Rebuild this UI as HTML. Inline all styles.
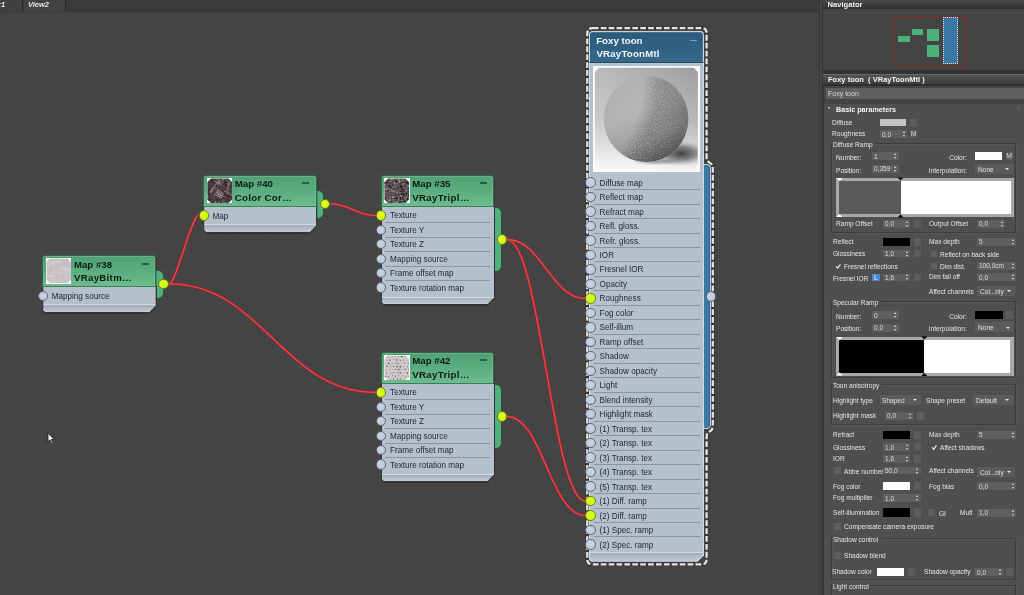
<!DOCTYPE html><html><head><meta charset="utf-8"><title>Slate Material Editor</title><style>
*{box-sizing:border-box;margin:0;padding:0}
html,body{width:1024px;height:595px;overflow:hidden;background:#444;font-family:"Liberation Sans",sans-serif;}
.abs{position:absolute}
#canvas{will-change:transform;position:absolute;left:0;top:0;width:820px;height:595px;background-color:#444444;
 background-image:linear-gradient(to right,#484848 1px,transparent 1px),linear-gradient(to bottom,#484848 1px,transparent 1px);
 background-size:16.13px 16.1px;background-position:8.3px 12.2px;border-right:1px solid #383838;overflow:hidden}
#tabbar{position:absolute;left:0;top:0;width:820px;height:11px;background:#3b3b3b;border-bottom:1px solid #333}
.tab{position:absolute;top:0;height:11px;background:#414141;border-right:1px solid #2c2c2c;color:#e8e8e8;font-size:7.5px;font-style:italic;font-weight:bold;line-height:9px;white-space:nowrap}
.node{position:absolute}
.nhead{position:absolute;left:0;top:0;border:1px solid #32674a;border-bottom:1px solid #3f7d5a;border-radius:3px 3px 0 0;background:linear-gradient(#50a274 0%,#59ac7e 45%,#6dbc8f 100%);box-shadow:inset 0 1px 0 rgba(255,255,255,.16),inset -1px 0 0 rgba(255,255,255,.12)}
.nbody{position:absolute;left:0;background:#b3bfca;border:1px solid #59626b;border-top:none}
.nfoot{position:absolute;left:0;background:linear-gradient(#9fabb6 0,#9fabb6 1px,#b9c4ce 1px,#b3bfca 100%);border:1px solid #59626b;border-top:none;border-radius:0 0 3px 3px}
.thumb{position:absolute;left:2.7px;top:2.2px;width:25.5px;height:25.5px;background:#fff;overflow:hidden}
.thumb i{position:absolute;left:1px;top:1px;width:24px;height:24px;border-radius:5px;display:block}
.t1,.t2{position:absolute;left:30.6px;font-weight:bold;font-size:9.7px;color:#0c1a12;white-space:nowrap;line-height:12px}
.t1{top:2.7px}.t2{top:16.1px;letter-spacing:0.3px}
.minus{position:absolute;height:2.1px;width:7.2px;background:#256343;top:6.6px}
.slot{position:absolute;left:0;height:14.5px;font-size:8.15px;color:#26292d;line-height:14.5px;white-space:nowrap}
.slot span{position:absolute;left:9.4px;top:1.3px}
.sep{position:absolute;height:1px;background:#8995a0;left:4px}
.dot{position:absolute;width:10.4px;height:10.4px;border-radius:50%}
.din{background:radial-gradient(circle at 45% 40%,#c9d5e3 0,#bfccdd 60%,#b4c2d5 100%);border:1px solid #5f6873}
.don{background:radial-gradient(circle at 45% 40%,#dcff2a 0,#d2f916 60%,#c3ea10 100%);border:1px solid #707f14}
.otab{position:absolute;background:#52b07e;border:1px solid #28563d;border-left:none;border-radius:0 6px 6px 0}
/* right panel */
#rp{will-change:transform;position:absolute;left:820px;top:0;width:204px;height:595px;background:#444;color:#e6e6e6;font-size:8.2px;overflow:hidden}
.lbl{position:absolute;white-space:nowrap;line-height:10px;color:#e6e6e6;font-size:7.4px}
.spin{position:absolute;background:#5f5f5f;height:8px;color:#dcdcdc;font-size:7.3px;line-height:8px;white-space:nowrap}
.spin b{position:absolute;left:2px;top:0.4px;font-weight:normal}
.spin s{position:absolute;right:1.2px;top:1px;width:3px;height:6px;text-decoration:none}
.spin s:before,.spin s:after{content:"";position:absolute;left:0;border-left:1.5px solid transparent;border-right:1.5px solid transparent}
.spin s:before{top:0;border-bottom:2px solid #e2e2e2}
.spin s:after{bottom:0;border-top:2px solid #e2e2e2}
.sw{position:absolute;height:8px}
.mb{position:absolute;width:7px;height:8px;background:#5d5d5d;color:#d8d8d8;font-size:7px;line-height:8px;text-align:center}
.cb{position:absolute;width:7px;height:7px;background:#5e5e5e}
.dd{position:absolute;background:#5b5b5b;height:10px;color:#e0e0e0;font-size:7.4px;line-height:10px;white-space:nowrap}
.dd b{position:absolute;left:2.5px;top:1px;font-weight:normal}
.dd:after{content:"";position:absolute;right:3.8px;top:4.5px;border-left:2.1px solid transparent;border-right:2.1px solid transparent;border-top:2.7px solid #ececec}
.grp{position:absolute;border:1px solid #3c3c3c;box-shadow:inset 1px 1px 0 #565656, 1px 1px 0 #565656}
.glbl{position:absolute;white-space:nowrap;line-height:10px;color:#e6e6e6;font-size:7.4px;background:#4f4f4f;padding:0 2px 0 1px}
</style></head><body>
<div id="canvas">
<div id="tabbar"></div>
<div class="abs" style="left:0;top:11px;width:819px;height:3px;background:linear-gradient(#3c3c3c,#434343)"></div>
<div class="tab" style="left:0;width:23px"><span class="abs" style="left:-2px;top:0">r1</span></div>
<div class="tab" style="left:24px;width:42px;background:#424242"><span class="abs" style="left:4px;top:0">View2</span></div>
<svg class="abs" style="left:0;top:0" width="820" height="595" viewBox="0 0 820 595" fill="none">
<path d="M169.2 283.8 C176.3 283.8,191.5 215.4,198.6 215.4" stroke="#a0242a" stroke-width="2.7" opacity="0.95"/>
<path d="M169.2 283.8 C262.3 283.8,282.9 392.5,376 392.5" stroke="#a0242a" stroke-width="2.7" opacity="0.95"/>
<path d="M330.2 203.8 C350.8 203.8,355.4 215.6,376 215.6" stroke="#a0242a" stroke-width="2.7" opacity="0.95"/>
<path d="M507 239.5 C542.3 239.5,550.2 298.4,585.5 298.4" stroke="#a0242a" stroke-width="2.7" opacity="0.95"/>
<path d="M507 239.5 C540.0 239.5,552.5 501.1,585.5 501.1" stroke="#a0242a" stroke-width="2.7" opacity="0.95"/>
<path d="M507 416.5 C542.3 416.5,550.2 515.6,585.5 515.6" stroke="#a0242a" stroke-width="2.7" opacity="0.95"/>
<path d="M169.2 283.8 C176.3 283.8,191.5 215.4,198.6 215.4" stroke="#e9454d" stroke-width="1.35"/>
<path d="M169.2 283.8 C262.3 283.8,282.9 392.5,376 392.5" stroke="#e9454d" stroke-width="1.35"/>
<path d="M330.2 203.8 C350.8 203.8,355.4 215.6,376 215.6" stroke="#e9454d" stroke-width="1.35"/>
<path d="M507 239.5 C542.3 239.5,550.2 298.4,585.5 298.4" stroke="#e9454d" stroke-width="1.35"/>
<path d="M507 239.5 C540.0 239.5,552.5 501.1,585.5 501.1" stroke="#e9454d" stroke-width="1.35"/>
<path d="M507 416.5 C542.3 416.5,550.2 515.6,585.5 515.6" stroke="#e9454d" stroke-width="1.35"/>
</svg>
<div class="node" style="left:42.3px;top:255px;width:113.8px;height:57.5px">
<div class="otab" style="left:113.3px;top:15.2px;width:8.3px;height:29px"></div>
<div class="abs" style="left:0;top:31px;width:114.6px;height:27.3px;background:#33383d;clip-path:polygon(0 0,100% 0,100% calc(100% - 6.5px),calc(100% - 6.5px) 100%,2px 100%,0 calc(100% - 2px));border-radius:0 0 2px 2px"></div>
<div class="abs" style="left:113.8px;top:3px;width:1px;height:44.0px;background:rgba(20,20,20,.22)"></div><div class="abs" style="left:3px;top:58.1px;width:103.8px;height:1.2px;background:rgba(20,20,20,.35)"></div>
<div class="abs" style="left:1px;top:32px;width:112.39999999999999px;height:25.3px;background:linear-gradient(#b4c0cb 0,#b4c0cb 17.5px,#d3dae1 17.5px,#d3dae1 18.5px,#a3aeb9 18.5px,#c3ccd4 100%);clip-path:polygon(0 0,100% 0,100% calc(100% - 6.5px),calc(100% - 6.5px) 100%,2px 100%,0 calc(100% - 2px))"></div>
<div class="abs" style="left:105.3px;top:51.0px;width:7px;height:1px;background:#8c97a2;transform:rotate(-45deg);transform-origin:0 0;opacity:.0"></div>
<div class="nhead" style="width:113.8px;height:32px">
<div class="thumb"><svg width="25.5" height="25.5" viewBox="0 0 25.5 25.5" style="position:absolute;left:0;top:0"><rect width="25.5" height="25.5" fill="#fdfdfd"/><clipPath id="c38"><path d="M4 0.4 H21.5 L25.1 4 V21.5 L21.5 25.1 H4 L0.4 21.5 V4 Z"/></clipPath><filter id="b38" x="-0.1" y="-0.1" width="1.2" height="1.2"><feGaussianBlur stdDeviation="0.45"/></filter><g clip-path="url(#c38)"><g filter="url(#b38)"><rect width="25.5" height="25.5" fill="#c9c3c5"/><rect x="16.0" y="10.7" width="8.3" height="2.2" fill="#cfc6c8" opacity="0.8" transform="rotate(10 16.0 10.7)"/><rect x="17.4" y="9.4" width="7.6" height="2.2" fill="#d6d0d1" opacity="0.8" transform="rotate(10 17.4 9.4)"/><rect x="8.6" y="6.7" width="6.0" height="2.2" fill="#cfc6c8" opacity="0.8" transform="rotate(170 8.6 6.7)"/><rect x="11.8" y="24.1" width="7.5" height="2.2" fill="#d6d0d1" opacity="0.8" transform="rotate(10 11.8 24.1)"/><rect x="2.1" y="12.2" width="6.6" height="2.2" fill="#d2cccd" opacity="0.8" transform="rotate(10 2.1 12.2)"/><rect x="9.5" y="18.1" width="9.5" height="2.2" fill="#d6d0d1" opacity="0.8" transform="rotate(170 9.5 18.1)"/><rect x="0.6" y="11.9" width="5.5" height="2.2" fill="#c0b8bb" opacity="0.8" transform="rotate(170 0.6 11.9)"/><rect x="22.3" y="2.2" width="8.6" height="2.2" fill="#c0b8bb" opacity="0.8" transform="rotate(100 22.3 2.2)"/><rect x="8.9" y="22.8" width="6.9" height="2.2" fill="#cfc6c8" opacity="0.8" transform="rotate(170 8.9 22.8)"/><rect x="4.5" y="6.6" width="8.1" height="2.2" fill="#cfc6c8" opacity="0.8" transform="rotate(170 4.5 6.6)"/><rect x="2.0" y="13.1" width="7.4" height="2.2" fill="#d2cccd" opacity="0.8" transform="rotate(100 2.0 13.1)"/><rect x="3.7" y="21.2" width="9.4" height="2.2" fill="#cfc6c8" opacity="0.8" transform="rotate(10 3.7 21.2)"/><rect x="21.1" y="0.8" width="8.5" height="2.2" fill="#d6d0d1" opacity="0.8" transform="rotate(170 21.1 0.8)"/><rect x="22.8" y="21.8" width="7.5" height="2.2" fill="#c0b8bb" opacity="0.8" transform="rotate(10 22.8 21.8)"/><rect x="9.4" y="17.1" width="9.6" height="2.2" fill="#c0b8bb" opacity="0.8" transform="rotate(10 9.4 17.1)"/><rect x="15.0" y="1.2" width="6.7" height="2.2" fill="#c0b8bb" opacity="0.8" transform="rotate(10 15.0 1.2)"/><rect x="9.4" y="22.6" width="9.2" height="2.2" fill="#cfc6c8" opacity="0.8" transform="rotate(170 9.4 22.6)"/><rect x="4.9" y="8.5" width="5.5" height="2.2" fill="#d2cccd" opacity="0.8" transform="rotate(170 4.9 8.5)"/><rect x="19.3" y="11.6" width="7.3" height="2.2" fill="#cfc6c8" opacity="0.8" transform="rotate(10 19.3 11.6)"/><rect x="6.5" y="10.5" width="4.1" height="2.2" fill="#c0b8bb" opacity="0.8" transform="rotate(100 6.5 10.5)"/><rect x="9.4" y="2.4" width="7.3" height="2.2" fill="#d6d0d1" opacity="0.8" transform="rotate(10 9.4 2.4)"/><rect x="17.3" y="15.4" width="5.7" height="2.2" fill="#d2cccd" opacity="0.8" transform="rotate(170 17.3 15.4)"/><rect x="19.3" y="6.5" width="6.5" height="2.2" fill="#c5bcbf" opacity="0.8" transform="rotate(170 19.3 6.5)"/><rect x="11.0" y="4.6" width="6.4" height="2.2" fill="#d2cccd" opacity="0.8" transform="rotate(170 11.0 4.6)"/><rect x="14.6" y="8.1" width="5.7" height="2.2" fill="#d2cccd" opacity="0.8" transform="rotate(10 14.6 8.1)"/><rect x="16.7" y="19.5" width="5.5" height="2.2" fill="#cfc6c8" opacity="0.8" transform="rotate(170 16.7 19.5)"/></g></g></svg></div>
<div class="t1">Map #38</div><div class="t2">VRayBitm…</div>
<div class="minus" style="left:98.3px"></div>
</div>
<div class="slot" style="top:33.65px;width:113.8px"><span>Mapping source</span></div>
<div class="dot din" style="left:-4.6px;top:35.70px"></div>
<div class="dot don" style="left:116.1px;top:23.8px"></div>
</div>
<div class="node" style="left:203.2px;top:174.6px;width:113.5px;height:57.5px">
<div class="otab" style="left:113px;top:15px;width:8.3px;height:29px"></div>
<div class="abs" style="left:0;top:31px;width:114.3px;height:27.3px;background:#33383d;clip-path:polygon(0 0,100% 0,100% calc(100% - 6.5px),calc(100% - 6.5px) 100%,2px 100%,0 calc(100% - 2px));border-radius:0 0 2px 2px"></div>
<div class="abs" style="left:113.5px;top:3px;width:1px;height:44.0px;background:rgba(20,20,20,.22)"></div><div class="abs" style="left:3px;top:58.1px;width:103.5px;height:1.2px;background:rgba(20,20,20,.35)"></div>
<div class="abs" style="left:1px;top:32px;width:112.1px;height:25.3px;background:linear-gradient(#b4c0cb 0,#b4c0cb 17.5px,#d3dae1 17.5px,#d3dae1 18.5px,#a3aeb9 18.5px,#c3ccd4 100%);clip-path:polygon(0 0,100% 0,100% calc(100% - 6.5px),calc(100% - 6.5px) 100%,2px 100%,0 calc(100% - 2px))"></div>
<div class="abs" style="left:105.0px;top:51.0px;width:7px;height:1px;background:#8c97a2;transform:rotate(-45deg);transform-origin:0 0;opacity:.0"></div>
<div class="nhead" style="width:113.5px;height:32px">
<div class="thumb"><svg width="25.5" height="25.5" viewBox="0 0 25.5 25.5" style="position:absolute;left:0;top:0"><rect width="25.5" height="25.5" fill="#fdfdfd"/><clipPath id="c40"><path d="M4 0.4 H21.5 L25.1 4 V21.5 L21.5 25.1 H4 L0.4 21.5 V4 Z"/></clipPath><filter id="b40" x="-0.1" y="-0.1" width="1.2" height="1.2"><feGaussianBlur stdDeviation="0.45"/></filter><g clip-path="url(#c40)"><g filter="url(#b40)"><rect width="25.5" height="25.5" fill="#4a3c3f"/><rect x="10.4" y="21.7" width="3.2" height="1.1" fill="#54464a" transform="rotate(30 10.4 21.7)"/><rect x="24.0" y="15.9" width="3.8" height="1.1" fill="#6d5a5e" transform="rotate(30 24.0 15.9)"/><rect x="21.8" y="9.9" width="3.2" height="1.1" fill="#8c777b" transform="rotate(115 21.8 9.9)"/><rect x="15.3" y="14.7" width="5.8" height="1.1" fill="#2c2426" transform="rotate(25 15.3 14.7)"/><rect x="19.4" y="6.5" width="4.5" height="1.1" fill="#2c2426" transform="rotate(30 19.4 6.5)"/><rect x="19.1" y="16.4" width="6.1" height="1.1" fill="#3a2f32" transform="rotate(25 19.1 16.4)"/><rect x="21.7" y="20.8" width="4.9" height="1.1" fill="#2c2426" transform="rotate(30 21.7 20.8)"/><rect x="17.9" y="6.4" width="6.1" height="1.1" fill="#3a2f32" transform="rotate(30 17.9 6.4)"/><rect x="19.2" y="2.3" width="6.5" height="1.1" fill="#3a2f32" transform="rotate(120 19.2 2.3)"/><rect x="11.9" y="2.6" width="4.2" height="1.1" fill="#8c777b" transform="rotate(25 11.9 2.6)"/><rect x="10.6" y="6.2" width="4.1" height="1.1" fill="#3a2f32" transform="rotate(115 10.6 6.2)"/><rect x="10.2" y="10.7" width="6.8" height="1.1" fill="#a08a8e" transform="rotate(30 10.2 10.7)"/><rect x="23.1" y="5.7" width="6.2" height="1.1" fill="#8c777b" transform="rotate(115 23.1 5.7)"/><rect x="23.9" y="19.8" width="6.6" height="1.1" fill="#54464a" transform="rotate(115 23.9 19.8)"/><rect x="10.1" y="20.7" width="5.5" height="1.1" fill="#3a2f32" transform="rotate(25 10.1 20.7)"/><rect x="10.9" y="22.6" width="8.4" height="1.1" fill="#54464a" transform="rotate(120 10.9 22.6)"/><rect x="3.2" y="2.3" width="8.8" height="1.1" fill="#2c2426" transform="rotate(25 3.2 2.3)"/><rect x="19.9" y="2.4" width="4.5" height="1.1" fill="#2c2426" transform="rotate(115 19.9 2.4)"/><rect x="-0.5" y="11.7" width="4.3" height="1.1" fill="#3a2f32" transform="rotate(120 -0.5 11.7)"/><rect x="6.4" y="11.8" width="3.2" height="1.1" fill="#8c777b" transform="rotate(120 6.4 11.8)"/><rect x="20.3" y="15.4" width="4.0" height="1.1" fill="#6d5a5e" transform="rotate(25 20.3 15.4)"/><rect x="7.8" y="15.6" width="7.6" height="1.1" fill="#a08a8e" transform="rotate(30 7.8 15.6)"/><rect x="17.5" y="12.4" width="8.4" height="1.1" fill="#a08a8e" transform="rotate(30 17.5 12.4)"/><rect x="10.8" y="15.3" width="8.6" height="1.1" fill="#a08a8e" transform="rotate(25 10.8 15.3)"/><rect x="23.0" y="13.9" width="3.2" height="1.1" fill="#6d5a5e" transform="rotate(30 23.0 13.9)"/><rect x="17.6" y="1.0" width="6.5" height="1.1" fill="#6d5a5e" transform="rotate(25 17.6 1.0)"/><rect x="-1.5" y="24.1" width="4.0" height="1.1" fill="#a08a8e" transform="rotate(115 -1.5 24.1)"/><rect x="13.4" y="-1.5" width="7.4" height="1.1" fill="#6d5a5e" transform="rotate(115 13.4 -1.5)"/><rect x="22.5" y="9.1" width="3.2" height="1.1" fill="#6d5a5e" transform="rotate(115 22.5 9.1)"/><rect x="-1.2" y="0.6" width="8.6" height="1.1" fill="#6d5a5e" transform="rotate(120 -1.2 0.6)"/><rect x="22.7" y="10.9" width="5.7" height="1.1" fill="#6d5a5e" transform="rotate(120 22.7 10.9)"/><rect x="13.1" y="22.6" width="8.2" height="1.1" fill="#8c777b" transform="rotate(120 13.1 22.6)"/><rect x="3.4" y="20.4" width="6.9" height="1.1" fill="#3a2f32" transform="rotate(115 3.4 20.4)"/><rect x="9.7" y="12.6" width="4.2" height="1.1" fill="#8c777b" transform="rotate(25 9.7 12.6)"/><rect x="15.0" y="22.2" width="8.4" height="1.1" fill="#8c777b" transform="rotate(30 15.0 22.2)"/><rect x="3.5" y="24.8" width="5.6" height="1.1" fill="#8c777b" transform="rotate(30 3.5 24.8)"/><rect x="3.7" y="14.1" width="3.7" height="1.1" fill="#2c2426" transform="rotate(115 3.7 14.1)"/><rect x="14.8" y="18.0" width="3.7" height="1.1" fill="#2c2426" transform="rotate(25 14.8 18.0)"/><rect x="9.5" y="0.5" width="8.7" height="1.1" fill="#6d5a5e" transform="rotate(30 9.5 0.5)"/><rect x="-1.6" y="11.1" width="6.2" height="1.1" fill="#2c2426" transform="rotate(120 -1.6 11.1)"/><rect x="13.5" y="-0.0" width="3.9" height="1.1" fill="#a08a8e" transform="rotate(25 13.5 -0.0)"/><rect x="9.9" y="4.4" width="7.5" height="1.1" fill="#6d5a5e" transform="rotate(25 9.9 4.4)"/><rect x="15.1" y="14.5" width="4.4" height="1.1" fill="#a08a8e" transform="rotate(115 15.1 14.5)"/><rect x="6.1" y="10.3" width="5.1" height="1.1" fill="#a08a8e" transform="rotate(115 6.1 10.3)"/><rect x="-0.7" y="-0.1" width="3.1" height="1.1" fill="#2c2426" transform="rotate(25 -0.7 -0.1)"/><rect x="16.8" y="15.5" width="4.8" height="1.1" fill="#a08a8e" transform="rotate(115 16.8 15.5)"/><rect x="8.9" y="16.8" width="4.2" height="1.1" fill="#6d5a5e" transform="rotate(120 8.9 16.8)"/><rect x="-0.0" y="-1.6" width="3.7" height="1.1" fill="#3a2f32" transform="rotate(30 -0.0 -1.6)"/><rect x="9.1" y="13.5" width="4.2" height="1.1" fill="#a08a8e" transform="rotate(30 9.1 13.5)"/><rect x="18.4" y="23.6" width="5.3" height="1.1" fill="#54464a" transform="rotate(25 18.4 23.6)"/><rect x="9.8" y="21.5" width="3.2" height="1.1" fill="#2c2426" transform="rotate(30 9.8 21.5)"/><rect x="1.4" y="17.6" width="5.0" height="1.1" fill="#8c777b" transform="rotate(120 1.4 17.6)"/><rect x="13.2" y="11.6" width="6.4" height="1.1" fill="#3a2f32" transform="rotate(30 13.2 11.6)"/><rect x="11.0" y="22.0" width="4.3" height="1.1" fill="#2c2426" transform="rotate(120 11.0 22.0)"/><rect x="24.0" y="15.1" width="5.1" height="1.1" fill="#2c2426" transform="rotate(120 24.0 15.1)"/><rect x="-0.9" y="20.0" width="5.6" height="1.1" fill="#54464a" transform="rotate(115 -0.9 20.0)"/><rect x="13.8" y="1.9" width="6.3" height="1.1" fill="#a08a8e" transform="rotate(120 13.8 1.9)"/><rect x="6.0" y="8.7" width="3.9" height="1.1" fill="#8c777b" transform="rotate(30 6.0 8.7)"/><rect x="3.5" y="21.3" width="8.1" height="1.1" fill="#2c2426" transform="rotate(115 3.5 21.3)"/><rect x="15.4" y="2.4" width="4.6" height="1.1" fill="#6d5a5e" transform="rotate(120 15.4 2.4)"/><rect x="-0.0" y="-1.7" width="7.9" height="1.1" fill="#54464a" transform="rotate(30 -0.0 -1.7)"/><rect x="7.2" y="2.5" width="8.3" height="1.1" fill="#8c777b" transform="rotate(25 7.2 2.5)"/><rect x="23.0" y="4.5" width="3.4" height="1.1" fill="#a08a8e" transform="rotate(120 23.0 4.5)"/><rect x="15.5" y="-1.2" width="4.3" height="1.1" fill="#2c2426" transform="rotate(115 15.5 -1.2)"/><rect x="10.5" y="4.1" width="7.3" height="1.1" fill="#8c777b" transform="rotate(115 10.5 4.1)"/><rect x="9.9" y="23.1" width="8.0" height="1.1" fill="#a08a8e" transform="rotate(120 9.9 23.1)"/><rect x="8.0" y="-1.5" width="8.2" height="1.1" fill="#2c2426" transform="rotate(120 8.0 -1.5)"/><rect x="4.8" y="3.0" width="3.7" height="1.1" fill="#54464a" transform="rotate(120 4.8 3.0)"/><rect x="3.3" y="10.1" width="8.2" height="1.1" fill="#2c2426" transform="rotate(120 3.3 10.1)"/><rect x="3.9" y="-0.4" width="4.6" height="1.1" fill="#3a2f32" transform="rotate(30 3.9 -0.4)"/></g></g></svg></div>
<div class="t1">Map #40</div><div class="t2">Color Cor…</div>
<div class="minus" style="left:98.0px"></div>
</div>
<div class="slot" style="top:33.65px;width:113.5px"><span>Map</span></div>
<div class="dot don" style="left:-4.6px;top:35.70px"></div>
<div class="dot don" style="left:116.39999999999999px;top:24.3px"></div>
</div>
<div class="node" style="left:380.7px;top:174.5px;width:113.8px;height:129.75px">
<div class="otab" style="left:113.3px;top:32px;width:8.2px;height:65.3px"></div>
<div class="abs" style="left:0;top:31px;width:114.6px;height:99.55px;background:#33383d;clip-path:polygon(0 0,100% 0,100% calc(100% - 6.5px),calc(100% - 6.5px) 100%,2px 100%,0 calc(100% - 2px));border-radius:0 0 2px 2px"></div>
<div class="abs" style="left:113.8px;top:3px;width:1px;height:116.25px;background:rgba(20,20,20,.22)"></div><div class="abs" style="left:3px;top:130.35px;width:103.8px;height:1.2px;background:rgba(20,20,20,.35)"></div>
<div class="abs" style="left:1px;top:32px;width:112.39999999999999px;height:97.55px;background:linear-gradient(#b4c0cb 0,#b4c0cb 89.75px,#d3dae1 89.75px,#d3dae1 90.75px,#a3aeb9 90.75px,#c3ccd4 100%);clip-path:polygon(0 0,100% 0,100% calc(100% - 6.5px),calc(100% - 6.5px) 100%,2px 100%,0 calc(100% - 2px))"></div>
<div class="abs" style="left:105.3px;top:123.25px;width:7px;height:1px;background:#8c97a2;transform:rotate(-45deg);transform-origin:0 0;opacity:.0"></div>
<div class="nhead" style="width:113.8px;height:32px">
<div class="thumb"><svg width="25.5" height="25.5" viewBox="0 0 25.5 25.5" style="position:absolute;left:0;top:0"><rect width="25.5" height="25.5" fill="#fdfdfd"/><clipPath id="c35"><path d="M4 0.4 H21.5 L25.1 4 V21.5 L21.5 25.1 H4 L0.4 21.5 V4 Z"/></clipPath><filter id="b35" x="-0.1" y="-0.1" width="1.2" height="1.2"><feGaussianBlur stdDeviation="0.45"/></filter><g clip-path="url(#c35)"><g filter="url(#b35)"><rect width="25.5" height="25.5" fill="#5a5054"/><circle cx="14.0" cy="19.1" r="0.9" fill="#7a7074"/><circle cx="7.3" cy="24.6" r="0.8" fill="#3a3236"/><circle cx="19.2" cy="23.7" r="0.6" fill="#141112"/><circle cx="20.5" cy="23.4" r="1.0" fill="#1c181a"/><circle cx="9.3" cy="24.4" r="0.5" fill="#8a6a72"/><circle cx="9.6" cy="0.6" r="0.8" fill="#9a9094"/><circle cx="0.6" cy="25.0" r="0.5" fill="#141112"/><circle cx="4.2" cy="1.9" r="0.9" fill="#1c181a"/><circle cx="7.5" cy="14.7" r="0.8" fill="#7a7074"/><circle cx="13.9" cy="21.0" r="1.0" fill="#8a6a72"/><circle cx="8.2" cy="15.8" r="0.5" fill="#8a6a72"/><circle cx="12.8" cy="19.3" r="0.9" fill="#1c181a"/><circle cx="17.1" cy="14.0" r="0.5" fill="#6a5c60"/><circle cx="10.4" cy="5.0" r="0.7" fill="#9a9094"/><circle cx="6.6" cy="14.9" r="0.6" fill="#7a7074"/><circle cx="0.5" cy="17.0" r="0.5" fill="#7a7074"/><circle cx="0.6" cy="17.8" r="0.7" fill="#9a9094"/><circle cx="17.1" cy="12.8" r="0.9" fill="#3a3236"/><circle cx="7.5" cy="11.3" r="0.7" fill="#9a9094"/><circle cx="17.8" cy="21.1" r="0.9" fill="#2a2426"/><circle cx="13.8" cy="4.3" r="0.8" fill="#2a2426"/><circle cx="12.7" cy="17.4" r="0.7" fill="#3a3236"/><circle cx="2.2" cy="14.4" r="0.7" fill="#8a6a72"/><circle cx="25.0" cy="24.3" r="0.7" fill="#8a6a72"/><circle cx="22.5" cy="16.6" r="0.6" fill="#141112"/><circle cx="17.2" cy="13.7" r="1.0" fill="#1c181a"/><circle cx="6.2" cy="21.0" r="0.7" fill="#aaa0a4"/><circle cx="10.8" cy="1.5" r="0.7" fill="#3a3236"/><circle cx="17.9" cy="4.6" r="0.9" fill="#1c181a"/><circle cx="12.6" cy="20.4" r="0.9" fill="#1c181a"/><circle cx="23.6" cy="18.1" r="0.6" fill="#3a3236"/><circle cx="24.6" cy="19.5" r="0.6" fill="#7a7074"/><circle cx="5.3" cy="5.3" r="0.9" fill="#3a3236"/><circle cx="19.8" cy="24.2" r="0.7" fill="#aaa0a4"/><circle cx="3.8" cy="11.3" r="0.7" fill="#3a3236"/><circle cx="22.1" cy="15.1" r="0.5" fill="#141112"/><circle cx="18.8" cy="21.5" r="0.6" fill="#aaa0a4"/><circle cx="9.4" cy="9.3" r="0.8" fill="#9a9094"/><circle cx="11.6" cy="25.0" r="0.6" fill="#1c181a"/><circle cx="9.9" cy="19.6" r="0.7" fill="#9a9094"/><circle cx="21.6" cy="21.5" r="0.7" fill="#141112"/><circle cx="6.7" cy="3.4" r="0.9" fill="#8a6a72"/><circle cx="12.5" cy="7.8" r="0.7" fill="#6a5c60"/><circle cx="2.9" cy="14.9" r="0.5" fill="#141112"/><circle cx="13.1" cy="14.3" r="0.9" fill="#9a9094"/><circle cx="5.5" cy="8.5" r="0.7" fill="#141112"/><circle cx="9.9" cy="10.8" r="0.5" fill="#3a3236"/><circle cx="19.8" cy="9.2" r="0.5" fill="#aaa0a4"/><circle cx="23.7" cy="5.9" r="0.9" fill="#2a2426"/><circle cx="25.4" cy="1.9" r="0.7" fill="#141112"/><circle cx="18.7" cy="6.8" r="0.7" fill="#7a7074"/><circle cx="5.0" cy="11.2" r="0.5" fill="#8a6a72"/><circle cx="19.6" cy="17.4" r="0.9" fill="#141112"/><circle cx="22.1" cy="12.8" r="0.8" fill="#aaa0a4"/><circle cx="19.0" cy="5.3" r="0.6" fill="#aaa0a4"/><circle cx="0.0" cy="4.7" r="1.0" fill="#2a2426"/><circle cx="11.9" cy="17.7" r="0.9" fill="#3a3236"/><circle cx="8.2" cy="24.7" r="0.9" fill="#6a5c60"/><circle cx="17.5" cy="8.4" r="0.9" fill="#141112"/><circle cx="6.8" cy="14.4" r="0.6" fill="#2a2426"/><circle cx="3.6" cy="9.9" r="0.9" fill="#aaa0a4"/><circle cx="15.8" cy="2.8" r="0.7" fill="#7a7074"/><circle cx="4.3" cy="7.2" r="0.7" fill="#7a7074"/><circle cx="8.8" cy="15.0" r="0.5" fill="#8a6a72"/><circle cx="17.6" cy="10.6" r="0.9" fill="#1c181a"/><circle cx="12.3" cy="3.4" r="0.9" fill="#141112"/><circle cx="7.4" cy="1.4" r="0.7" fill="#aaa0a4"/><circle cx="19.6" cy="15.7" r="1.0" fill="#1c181a"/><circle cx="1.6" cy="4.7" r="0.6" fill="#2a2426"/><circle cx="14.5" cy="20.1" r="0.5" fill="#aaa0a4"/><circle cx="20.5" cy="19.5" r="0.7" fill="#7a7074"/><circle cx="3.8" cy="24.4" r="0.7" fill="#2a2426"/><circle cx="4.1" cy="1.4" r="0.8" fill="#3a3236"/><circle cx="13.7" cy="10.2" r="0.7" fill="#2a2426"/><circle cx="2.4" cy="0.7" r="0.7" fill="#2a2426"/><circle cx="6.5" cy="13.0" r="0.8" fill="#6a5c60"/><circle cx="2.3" cy="15.3" r="0.6" fill="#8a6a72"/><circle cx="24.9" cy="13.5" r="0.5" fill="#141112"/><circle cx="19.7" cy="15.4" r="0.6" fill="#3a3236"/><circle cx="10.1" cy="23.5" r="0.5" fill="#8a6a72"/><circle cx="15.0" cy="21.5" r="0.9" fill="#7a7074"/><circle cx="14.0" cy="23.7" r="0.9" fill="#7a7074"/><circle cx="17.4" cy="16.1" r="1.0" fill="#1c181a"/><circle cx="7.8" cy="20.6" r="0.8" fill="#3a3236"/><circle cx="6.3" cy="22.9" r="0.9" fill="#6a5c60"/><circle cx="11.9" cy="19.7" r="0.6" fill="#1c181a"/><circle cx="19.1" cy="21.6" r="0.7" fill="#141112"/><circle cx="20.7" cy="13.1" r="0.5" fill="#141112"/><circle cx="12.4" cy="19.1" r="0.8" fill="#7a7074"/><circle cx="0.5" cy="14.2" r="0.8" fill="#7a7074"/><circle cx="22.0" cy="8.9" r="0.8" fill="#6a5c60"/><circle cx="25.5" cy="10.2" r="0.6" fill="#7a7074"/><circle cx="16.2" cy="21.3" r="0.7" fill="#3a3236"/><circle cx="15.6" cy="16.8" r="0.5" fill="#1c181a"/><circle cx="22.2" cy="20.1" r="1.0" fill="#aaa0a4"/><circle cx="12.8" cy="2.5" r="0.6" fill="#8a6a72"/><circle cx="12.0" cy="25.1" r="0.8" fill="#9a9094"/><circle cx="16.6" cy="17.8" r="0.8" fill="#aaa0a4"/><circle cx="1.2" cy="3.1" r="0.6" fill="#3a3236"/><circle cx="11.7" cy="18.4" r="0.5" fill="#6a5c60"/><circle cx="9.2" cy="14.0" r="0.5" fill="#6a5c60"/><circle cx="14.1" cy="2.4" r="0.8" fill="#9a9094"/><circle cx="4.4" cy="0.6" r="0.6" fill="#8a6a72"/><circle cx="18.3" cy="0.4" r="0.9" fill="#2a2426"/><circle cx="6.3" cy="9.5" r="0.5" fill="#9a9094"/><circle cx="19.4" cy="19.0" r="0.5" fill="#9a9094"/><circle cx="4.3" cy="9.3" r="0.5" fill="#2a2426"/><circle cx="3.5" cy="11.5" r="0.9" fill="#3a3236"/><circle cx="4.0" cy="12.1" r="0.6" fill="#141112"/><circle cx="15.2" cy="17.1" r="0.8" fill="#3a3236"/><circle cx="25.2" cy="19.7" r="0.6" fill="#141112"/><circle cx="10.1" cy="13.2" r="0.7" fill="#aaa0a4"/><circle cx="7.9" cy="14.5" r="0.7" fill="#3a3236"/><circle cx="2.8" cy="11.6" r="1.0" fill="#9a9094"/><circle cx="12.3" cy="10.4" r="0.7" fill="#aaa0a4"/><circle cx="3.6" cy="25.3" r="0.9" fill="#8a6a72"/><circle cx="5.2" cy="0.6" r="0.5" fill="#3a3236"/><circle cx="6.1" cy="7.7" r="0.8" fill="#1c181a"/><circle cx="1.5" cy="22.7" r="0.7" fill="#9a9094"/><circle cx="12.9" cy="4.8" r="0.8" fill="#9a9094"/><circle cx="12.6" cy="3.2" r="1.0" fill="#141112"/><circle cx="23.8" cy="0.0" r="0.9" fill="#8a6a72"/><circle cx="15.2" cy="4.1" r="0.8" fill="#8a6a72"/><circle cx="8.6" cy="19.4" r="0.7" fill="#aaa0a4"/><circle cx="12.9" cy="24.7" r="1.0" fill="#aaa0a4"/><circle cx="7.1" cy="7.3" r="0.9" fill="#2a2426"/><circle cx="3.2" cy="9.0" r="0.7" fill="#6a5c60"/><circle cx="4.9" cy="23.0" r="0.7" fill="#8a6a72"/><circle cx="11.4" cy="8.1" r="0.6" fill="#9a9094"/><circle cx="18.0" cy="18.3" r="1.0" fill="#9a9094"/><circle cx="23.0" cy="11.1" r="0.7" fill="#7a7074"/><circle cx="16.6" cy="20.5" r="0.6" fill="#1c181a"/><circle cx="23.8" cy="3.3" r="0.9" fill="#3a3236"/><circle cx="23.4" cy="20.9" r="0.8" fill="#141112"/><circle cx="9.6" cy="12.7" r="0.7" fill="#7a7074"/><circle cx="16.8" cy="12.4" r="0.5" fill="#1c181a"/><circle cx="15.4" cy="4.1" r="0.9" fill="#aaa0a4"/><circle cx="0.7" cy="4.5" r="0.9" fill="#141112"/><circle cx="25.1" cy="5.6" r="0.9" fill="#3a3236"/><circle cx="8.1" cy="1.7" r="0.6" fill="#9a9094"/><circle cx="24.3" cy="0.5" r="0.7" fill="#aaa0a4"/><circle cx="19.3" cy="1.2" r="1.0" fill="#8a6a72"/><circle cx="16.3" cy="14.8" r="0.9" fill="#8a6a72"/><circle cx="7.9" cy="7.1" r="0.9" fill="#1c181a"/><circle cx="7.0" cy="10.0" r="0.9" fill="#3a3236"/><circle cx="19.8" cy="23.1" r="0.7" fill="#1c181a"/><circle cx="20.9" cy="4.7" r="0.9" fill="#8a6a72"/><circle cx="12.3" cy="4.5" r="0.7" fill="#9a9094"/><circle cx="5.0" cy="11.1" r="0.5" fill="#6a5c60"/><circle cx="7.6" cy="21.6" r="0.7" fill="#3a3236"/><circle cx="19.3" cy="10.4" r="0.5" fill="#8a6a72"/><circle cx="11.8" cy="10.6" r="0.8" fill="#3a3236"/><circle cx="3.9" cy="4.5" r="0.6" fill="#2a2426"/><circle cx="24.9" cy="19.8" r="0.6" fill="#7a7074"/><circle cx="13.2" cy="20.1" r="0.8" fill="#141112"/><circle cx="20.4" cy="20.3" r="0.9" fill="#1c181a"/><circle cx="21.2" cy="8.1" r="0.7" fill="#1c181a"/><circle cx="3.0" cy="1.1" r="0.9" fill="#8a6a72"/><circle cx="1.7" cy="6.8" r="0.5" fill="#aaa0a4"/><circle cx="20.7" cy="9.1" r="0.6" fill="#6a5c60"/><circle cx="24.2" cy="10.8" r="0.6" fill="#2a2426"/><circle cx="5.9" cy="22.2" r="0.7" fill="#aaa0a4"/><circle cx="8.1" cy="13.2" r="0.6" fill="#aaa0a4"/><circle cx="11.2" cy="20.1" r="0.8" fill="#3a3236"/><circle cx="13.3" cy="5.5" r="0.6" fill="#aaa0a4"/><circle cx="10.4" cy="24.6" r="0.7" fill="#9a9094"/><circle cx="6.5" cy="25.5" r="0.7" fill="#9a9094"/><circle cx="0.1" cy="0.2" r="0.7" fill="#8a6a72"/><circle cx="8.8" cy="21.4" r="1.0" fill="#8a6a72"/><circle cx="5.0" cy="23.5" r="1.0" fill="#7a7074"/><circle cx="19.1" cy="5.0" r="0.5" fill="#9a9094"/><circle cx="1.7" cy="21.5" r="0.6" fill="#8a6a72"/><circle cx="18.2" cy="16.2" r="0.7" fill="#6a5c60"/><circle cx="23.5" cy="17.3" r="0.7" fill="#7a7074"/><circle cx="22.5" cy="20.2" r="0.6" fill="#6a5c60"/><circle cx="2.5" cy="13.1" r="0.6" fill="#3a3236"/><circle cx="22.9" cy="18.7" r="0.7" fill="#7a7074"/><circle cx="7.0" cy="17.3" r="0.6" fill="#1c181a"/><circle cx="9.9" cy="18.5" r="0.8" fill="#8a6a72"/><circle cx="23.1" cy="24.8" r="0.5" fill="#1c181a"/><circle cx="14.0" cy="3.9" r="0.5" fill="#2a2426"/><circle cx="21.4" cy="22.7" r="0.7" fill="#3a3236"/><circle cx="9.1" cy="20.6" r="0.7" fill="#2a2426"/><circle cx="21.3" cy="21.6" r="1.0" fill="#8a6a72"/><circle cx="23.5" cy="21.1" r="0.6" fill="#1c181a"/><circle cx="19.1" cy="12.3" r="0.6" fill="#141112"/><circle cx="8.8" cy="14.8" r="0.5" fill="#6a5c60"/><circle cx="18.5" cy="22.4" r="0.6" fill="#aaa0a4"/><circle cx="5.5" cy="13.9" r="0.6" fill="#9a9094"/><circle cx="1.3" cy="3.3" r="1.0" fill="#8a6a72"/><circle cx="4.2" cy="7.6" r="0.7" fill="#3a3236"/><circle cx="5.5" cy="24.8" r="0.7" fill="#3a3236"/><circle cx="16.4" cy="12.8" r="0.5" fill="#9a9094"/><circle cx="6.3" cy="21.3" r="0.6" fill="#8a6a72"/><circle cx="3.0" cy="4.6" r="0.8" fill="#1c181a"/><circle cx="0.3" cy="2.2" r="0.5" fill="#2a2426"/><circle cx="24.5" cy="8.4" r="0.9" fill="#9a9094"/><circle cx="6.6" cy="18.3" r="0.7" fill="#7a7074"/><circle cx="21.1" cy="8.1" r="0.7" fill="#8a6a72"/><circle cx="1.6" cy="11.3" r="0.9" fill="#9a9094"/><circle cx="0.8" cy="22.5" r="0.9" fill="#1c181a"/><circle cx="21.1" cy="8.8" r="0.7" fill="#141112"/><circle cx="6.7" cy="0.8" r="0.6" fill="#7a7074"/><circle cx="7.0" cy="24.0" r="0.9" fill="#3a3236"/><circle cx="20.1" cy="11.0" r="0.6" fill="#1c181a"/><circle cx="7.2" cy="13.3" r="0.9" fill="#8a6a72"/><circle cx="18.6" cy="19.5" r="0.9" fill="#2a2426"/><circle cx="15.9" cy="5.8" r="0.6" fill="#141112"/><circle cx="10.9" cy="2.1" r="0.7" fill="#7a7074"/><circle cx="20.0" cy="4.2" r="0.7" fill="#141112"/><circle cx="18.7" cy="0.2" r="0.8" fill="#8a6a72"/><circle cx="23.4" cy="23.2" r="0.7" fill="#6a5c60"/><circle cx="4.6" cy="15.0" r="0.6" fill="#8a6a72"/><circle cx="15.3" cy="1.5" r="0.8" fill="#9a9094"/><circle cx="3.5" cy="13.4" r="0.6" fill="#1c181a"/><circle cx="21.0" cy="10.0" r="1.0" fill="#8a6a72"/><circle cx="5.5" cy="10.7" r="1.0" fill="#8a6a72"/><circle cx="2.9" cy="21.9" r="0.5" fill="#1c181a"/><circle cx="15.8" cy="2.1" r="0.5" fill="#8a6a72"/><circle cx="23.2" cy="6.7" r="0.9" fill="#8a6a72"/><circle cx="16.0" cy="18.1" r="0.8" fill="#7a7074"/><circle cx="20.9" cy="14.5" r="0.6" fill="#9a9094"/><circle cx="1.2" cy="10.7" r="0.7" fill="#9a9094"/><circle cx="8.6" cy="19.6" r="0.7" fill="#aaa0a4"/><circle cx="20.3" cy="20.1" r="0.6" fill="#9a9094"/><circle cx="18.9" cy="9.0" r="0.6" fill="#141112"/><circle cx="10.7" cy="5.6" r="0.8" fill="#aaa0a4"/><circle cx="18.1" cy="14.5" r="0.6" fill="#7a7074"/><circle cx="18.1" cy="15.4" r="0.9" fill="#3a3236"/><circle cx="2.5" cy="14.0" r="0.7" fill="#8a6a72"/><circle cx="0.0" cy="4.6" r="0.6" fill="#1c181a"/><circle cx="16.1" cy="19.1" r="0.6" fill="#1c181a"/><circle cx="13.6" cy="18.1" r="0.7" fill="#8a6a72"/><circle cx="16.4" cy="8.3" r="0.7" fill="#141112"/><circle cx="4.5" cy="14.9" r="0.6" fill="#6a5c60"/><circle cx="4.7" cy="3.7" r="1.0" fill="#6a5c60"/><circle cx="24.9" cy="10.3" r="0.9" fill="#2a2426"/><circle cx="6.3" cy="25.4" r="0.8" fill="#9a9094"/><circle cx="24.8" cy="17.6" r="0.8" fill="#1c181a"/><circle cx="25.0" cy="5.2" r="0.6" fill="#141112"/><circle cx="15.7" cy="24.5" r="0.8" fill="#141112"/><circle cx="17.6" cy="20.5" r="0.6" fill="#9a9094"/><circle cx="23.5" cy="5.8" r="0.8" fill="#2a2426"/><circle cx="22.1" cy="4.8" r="0.8" fill="#141112"/><circle cx="5.3" cy="12.5" r="0.5" fill="#3a3236"/><circle cx="3.8" cy="21.9" r="0.7" fill="#9a9094"/><circle cx="19.4" cy="20.6" r="0.5" fill="#6a5c60"/><circle cx="12.2" cy="4.9" r="0.6" fill="#2a2426"/><circle cx="25.3" cy="1.6" r="1.0" fill="#8a6a72"/><circle cx="7.3" cy="6.9" r="0.7" fill="#aaa0a4"/><circle cx="17.9" cy="3.0" r="1.0" fill="#7a7074"/><circle cx="20.0" cy="11.1" r="0.6" fill="#1c181a"/><circle cx="0.5" cy="21.6" r="1.0" fill="#6a5c60"/><circle cx="16.8" cy="20.2" r="0.7" fill="#2a2426"/><circle cx="9.2" cy="19.4" r="0.8" fill="#aaa0a4"/><circle cx="5.4" cy="12.8" r="0.6" fill="#8a6a72"/><circle cx="24.2" cy="1.5" r="0.9" fill="#aaa0a4"/><circle cx="1.0" cy="24.6" r="0.6" fill="#2a2426"/><circle cx="18.7" cy="7.4" r="0.8" fill="#7a7074"/><circle cx="23.6" cy="4.8" r="0.5" fill="#141112"/></g></g></svg></div>
<div class="t1">Map #35</div><div class="t2">VRayTripl…</div>
<div class="minus" style="left:98.3px"></div>
</div>
<div class="slot" style="top:33.65px;width:113.8px"><span>Texture</span></div>
<div class="sep" style="top:47.70px;width:105.8px"></div>
<div class="slot" style="top:48.10px;width:113.8px"><span>Texture Y</span></div>
<div class="sep" style="top:62.15px;width:105.8px"></div>
<div class="slot" style="top:62.55px;width:113.8px"><span>Texture Z</span></div>
<div class="sep" style="top:76.60px;width:105.8px"></div>
<div class="slot" style="top:77.00px;width:113.8px"><span>Mapping source</span></div>
<div class="sep" style="top:91.05px;width:105.8px"></div>
<div class="slot" style="top:91.45px;width:113.8px"><span>Frame offset map</span></div>
<div class="sep" style="top:105.50px;width:105.8px"></div>
<div class="slot" style="top:105.90px;width:113.8px"><span>Texture rotation map</span></div>
<div class="dot don" style="left:-4.6px;top:35.70px"></div>
<div class="dot din" style="left:-4.6px;top:50.15px"></div>
<div class="dot din" style="left:-4.6px;top:64.60px"></div>
<div class="dot din" style="left:-4.6px;top:79.05px"></div>
<div class="dot din" style="left:-4.6px;top:93.50px"></div>
<div class="dot din" style="left:-4.6px;top:107.95px"></div>
<div class="dot don" style="left:116.1px;top:59.8px"></div>
</div>
<div class="node" style="left:380.7px;top:351.5px;width:113.8px;height:129.75px">
<div class="otab" style="left:113.3px;top:32px;width:8.2px;height:65.3px"></div>
<div class="abs" style="left:0;top:31px;width:114.6px;height:99.55px;background:#33383d;clip-path:polygon(0 0,100% 0,100% calc(100% - 6.5px),calc(100% - 6.5px) 100%,2px 100%,0 calc(100% - 2px));border-radius:0 0 2px 2px"></div>
<div class="abs" style="left:113.8px;top:3px;width:1px;height:116.25px;background:rgba(20,20,20,.22)"></div><div class="abs" style="left:3px;top:130.35px;width:103.8px;height:1.2px;background:rgba(20,20,20,.35)"></div>
<div class="abs" style="left:1px;top:32px;width:112.39999999999999px;height:97.55px;background:linear-gradient(#b4c0cb 0,#b4c0cb 89.75px,#d3dae1 89.75px,#d3dae1 90.75px,#a3aeb9 90.75px,#c3ccd4 100%);clip-path:polygon(0 0,100% 0,100% calc(100% - 6.5px),calc(100% - 6.5px) 100%,2px 100%,0 calc(100% - 2px))"></div>
<div class="abs" style="left:105.3px;top:123.25px;width:7px;height:1px;background:#8c97a2;transform:rotate(-45deg);transform-origin:0 0;opacity:.0"></div>
<div class="nhead" style="width:113.8px;height:32px">
<div class="thumb"><svg width="25.5" height="25.5" viewBox="0 0 25.5 25.5" style="position:absolute;left:0;top:0"><rect width="25.5" height="25.5" fill="#fdfdfd"/><clipPath id="c42"><path d="M4 0.4 H21.5 L25.1 4 V21.5 L21.5 25.1 H4 L0.4 21.5 V4 Z"/></clipPath><filter id="b42" x="-0.1" y="-0.1" width="1.2" height="1.2"><feGaussianBlur stdDeviation="0.45"/></filter><g clip-path="url(#c42)"><g filter="url(#b42)"><rect width="25.5" height="25.5" fill="#cfcaca"/><rect x="16.0" y="0.6" width="4.4" height="0.8" fill="#c4bcbd" transform="rotate(0 16.0 0.6)"/><rect x="18.4" y="16.9" width="7.5" height="0.8" fill="#c9c3c3" transform="rotate(0 18.4 16.9)"/><rect x="0.8" y="2.3" width="4.2" height="0.8" fill="#c4bcbd" transform="rotate(0 0.8 2.3)"/><rect x="17.9" y="17.5" width="5.1" height="0.8" fill="#d9b8bc" transform="rotate(90 17.9 17.5)"/><rect x="20.2" y="0.2" width="7.0" height="0.8" fill="#d9b8bc" transform="rotate(90 20.2 0.2)"/><rect x="6.9" y="5.4" width="6.8" height="0.8" fill="#d8d4d4" transform="rotate(0 6.9 5.4)"/><rect x="9.5" y="9.0" width="4.7" height="0.8" fill="#d8d4d4" transform="rotate(90 9.5 9.0)"/><rect x="18.2" y="13.4" width="7.9" height="0.8" fill="#d8d4d4" transform="rotate(90 18.2 13.4)"/><rect x="13.8" y="20.7" width="6.1" height="0.8" fill="#c4bcbd" transform="rotate(90 13.8 20.7)"/><rect x="17.6" y="1.1" width="4.1" height="0.8" fill="#d8d4d4" transform="rotate(90 17.6 1.1)"/><rect x="21.4" y="21.7" width="4.9" height="0.8" fill="#d9b8bc" transform="rotate(90 21.4 21.7)"/><rect x="4.1" y="8.9" width="6.4" height="0.8" fill="#c4bcbd" transform="rotate(0 4.1 8.9)"/><rect x="13.4" y="6.1" width="5.3" height="0.8" fill="#c4bcbd" transform="rotate(90 13.4 6.1)"/><rect x="17.1" y="21.1" width="6.9" height="0.8" fill="#d8d4d4" transform="rotate(0 17.1 21.1)"/><rect x="20.1" y="10.0" width="3.3" height="0.8" fill="#c4bcbd" transform="rotate(90 20.1 10.0)"/><rect x="16.4" y="9.9" width="7.6" height="0.8" fill="#c4bcbd" transform="rotate(90 16.4 9.9)"/><rect x="6.6" y="6.2" width="5.8" height="0.8" fill="#c9c3c3" transform="rotate(90 6.6 6.2)"/><rect x="22.4" y="10.0" width="4.1" height="0.8" fill="#c9c3c3" transform="rotate(0 22.4 10.0)"/><rect x="2.3" y="1.2" width="3.5" height="0.8" fill="#c9c3c3" transform="rotate(0 2.3 1.2)"/><rect x="14.9" y="9.6" width="6.0" height="0.8" fill="#d9b8bc" transform="rotate(90 14.9 9.6)"/><rect x="24.3" y="21.5" width="3.1" height="0.8" fill="#d9b8bc" transform="rotate(0 24.3 21.5)"/><rect x="19.2" y="8.5" width="4.5" height="0.8" fill="#c9c3c3" transform="rotate(0 19.2 8.5)"/><rect x="0.1" y="18.1" width="6.6" height="0.8" fill="#d8d4d4" transform="rotate(0 0.1 18.1)"/><rect x="21.8" y="7.5" width="6.2" height="0.8" fill="#c4bcbd" transform="rotate(0 21.8 7.5)"/><rect x="9.3" y="4.0" width="7.8" height="0.8" fill="#d9b8bc" transform="rotate(0 9.3 4.0)"/><rect x="12.2" y="2.8" width="4.8" height="0.8" fill="#c4bcbd" transform="rotate(90 12.2 2.8)"/><rect x="1.4" y="22.0" width="7.7" height="0.8" fill="#c9c3c3" transform="rotate(0 1.4 22.0)"/><rect x="20.4" y="24.4" width="5.7" height="0.8" fill="#c4bcbd" transform="rotate(0 20.4 24.4)"/><rect x="16.5" y="23.7" width="3.8" height="0.8" fill="#c4bcbd" transform="rotate(90 16.5 23.7)"/><rect x="23.2" y="18.9" width="6.4" height="0.8" fill="#c9c3c3" transform="rotate(90 23.2 18.9)"/><circle cx="1.9" cy="1.9" r="0.53" fill="#3a3638"/><circle cx="4.8" cy="1.6" r="0.38" fill="#4a4648"/><circle cx="8.2" cy="1.6" r="0.44" fill="#4a4648"/><circle cx="11.6" cy="1.4" r="0.38" fill="#4a4648"/><circle cx="15.0" cy="1.5" r="0.45" fill="#8a8486"/><circle cx="17.8" cy="1.5" r="0.72" fill="#3a3638"/><circle cx="21.4" cy="1.6" r="0.54" fill="#8a8486"/><circle cx="24.4" cy="1.5" r="0.52" fill="#8a8486"/><circle cx="3.1" cy="5.3" r="0.37" fill="#4a4648"/><circle cx="6.1" cy="5.2" r="0.67" fill="#4a4648"/><circle cx="9.5" cy="4.8" r="0.53" fill="#8a8486"/><circle cx="12.8" cy="5.0" r="0.70" fill="#4a4648"/><circle cx="16.3" cy="5.3" r="0.57" fill="#4a4648"/><circle cx="19.8" cy="5.0" r="0.36" fill="#4a4648"/><circle cx="23.3" cy="5.3" r="0.42" fill="#8a8486"/><circle cx="26.2" cy="5.3" r="0.71" fill="#6a6466"/><circle cx="1.4" cy="8.6" r="0.46" fill="#8a8486"/><circle cx="4.6" cy="8.4" r="0.64" fill="#3a3638"/><circle cx="8.2" cy="8.2" r="0.43" fill="#6a6466"/><circle cx="11.8" cy="8.3" r="0.57" fill="#5a5456"/><circle cx="14.3" cy="8.3" r="0.55" fill="#3a3638"/><circle cx="17.7" cy="8.6" r="0.38" fill="#6a6466"/><circle cx="21.0" cy="7.9" r="0.69" fill="#8a8486"/><circle cx="24.3" cy="8.5" r="0.45" fill="#3a3638"/><circle cx="2.8" cy="11.1" r="0.61" fill="#3a3638"/><circle cx="6.5" cy="11.7" r="0.43" fill="#5a5456"/><circle cx="9.5" cy="11.3" r="0.62" fill="#5a5456"/><circle cx="13.0" cy="11.7" r="0.72" fill="#4a4648"/><circle cx="16.3" cy="11.8" r="0.75" fill="#4a4648"/><circle cx="19.7" cy="11.4" r="0.40" fill="#5a5456"/><circle cx="23.3" cy="11.7" r="0.50" fill="#6a6466"/><circle cx="26.2" cy="11.4" r="0.47" fill="#3a3638"/><circle cx="1.1" cy="14.9" r="0.47" fill="#4a4648"/><circle cx="5.2" cy="14.3" r="0.40" fill="#4a4648"/><circle cx="8.3" cy="14.3" r="0.46" fill="#6a6466"/><circle cx="11.6" cy="14.4" r="0.60" fill="#5a5456"/><circle cx="14.7" cy="14.4" r="0.71" fill="#4a4648"/><circle cx="17.7" cy="14.5" r="0.46" fill="#4a4648"/><circle cx="21.2" cy="14.3" r="0.74" fill="#6a6466"/><circle cx="24.8" cy="14.6" r="0.52" fill="#4a4648"/><circle cx="2.8" cy="18.2" r="0.63" fill="#6a6466"/><circle cx="6.5" cy="18.1" r="0.58" fill="#6a6466"/><circle cx="9.7" cy="17.4" r="0.50" fill="#4a4648"/><circle cx="13.4" cy="17.6" r="0.45" fill="#4a4648"/><circle cx="16.2" cy="17.8" r="0.70" fill="#3a3638"/><circle cx="19.8" cy="18.1" r="0.44" fill="#6a6466"/><circle cx="23.3" cy="18.0" r="0.70" fill="#4a4648"/><circle cx="26.0" cy="18.1" r="0.66" fill="#8a8486"/><circle cx="1.7" cy="21.3" r="0.67" fill="#5a5456"/><circle cx="4.5" cy="21.2" r="0.50" fill="#4a4648"/><circle cx="8.4" cy="20.8" r="0.68" fill="#8a8486"/><circle cx="11.3" cy="21.3" r="0.70" fill="#6a6466"/><circle cx="14.3" cy="20.8" r="0.48" fill="#4a4648"/><circle cx="18.4" cy="20.8" r="0.61" fill="#8a8486"/><circle cx="21.4" cy="21.3" r="0.48" fill="#4a4648"/><circle cx="24.3" cy="21.4" r="0.42" fill="#5a5456"/><circle cx="2.8" cy="24.3" r="0.49" fill="#5a5456"/><circle cx="6.4" cy="24.6" r="0.40" fill="#3a3638"/><circle cx="9.5" cy="23.8" r="0.52" fill="#3a3638"/><circle cx="13.4" cy="24.2" r="0.64" fill="#6a6466"/><circle cx="16.2" cy="23.9" r="0.62" fill="#5a5456"/><circle cx="19.7" cy="24.3" r="0.40" fill="#5a5456"/><circle cx="23.0" cy="24.3" r="0.48" fill="#5a5456"/><circle cx="26.3" cy="24.0" r="0.62" fill="#8a8486"/></g></g></svg></div>
<div class="t1">Map #42</div><div class="t2">VRayTripl…</div>
<div class="minus" style="left:98.3px"></div>
</div>
<div class="slot" style="top:33.65px;width:113.8px"><span>Texture</span></div>
<div class="sep" style="top:47.70px;width:105.8px"></div>
<div class="slot" style="top:48.10px;width:113.8px"><span>Texture Y</span></div>
<div class="sep" style="top:62.15px;width:105.8px"></div>
<div class="slot" style="top:62.55px;width:113.8px"><span>Texture Z</span></div>
<div class="sep" style="top:76.60px;width:105.8px"></div>
<div class="slot" style="top:77.00px;width:113.8px"><span>Mapping source</span></div>
<div class="sep" style="top:91.05px;width:105.8px"></div>
<div class="slot" style="top:91.45px;width:113.8px"><span>Frame offset map</span></div>
<div class="sep" style="top:105.50px;width:105.8px"></div>
<div class="slot" style="top:105.90px;width:113.8px"><span>Texture rotation map</span></div>
<div class="dot don" style="left:-4.6px;top:35.70px"></div>
<div class="dot din" style="left:-4.6px;top:50.15px"></div>
<div class="dot din" style="left:-4.6px;top:64.60px"></div>
<div class="dot din" style="left:-4.6px;top:79.05px"></div>
<div class="dot din" style="left:-4.6px;top:93.50px"></div>
<div class="dot din" style="left:-4.6px;top:107.95px"></div>
<div class="dot don" style="left:116.1px;top:59.8px"></div>
</div>
<svg class="abs" style="left:0;top:0" width="820" height="595" viewBox="0 0 820 595" fill="none">
<path d="M592.8 28.1 H701.8 Q706.6 28.1 706.6 33 V157.5 Q706.6 161 709.7 162.7 Q712.8 164.4 712.8 168.5 V426 Q712.8 430 709.7 431.5 Q706.6 433 706.6 437 V559.4 Q706.6 564.4 701.6 564.4 H592.3 Q587.3 564.4 587.3 559.4 V33.6 Q587.3 28.1 592.8 28.1 Z" stroke="#343434" stroke-width="3.6"/>
<path d="M592.8 28.1 H701.8 Q706.6 28.1 706.6 33 V157.5 Q706.6 161 709.7 162.7 Q712.8 164.4 712.8 168.5 V426 Q712.8 430 709.7 431.5 Q706.6 433 706.6 437 V559.4 Q706.6 564.4 701.6 564.4 H592.3 Q587.3 564.4 587.3 559.4 V33.6 Q587.3 28.1 592.8 28.1 Z" stroke="#e4e4e4" stroke-width="2.3" stroke-dasharray="5.8 2.1"/>
</svg>
<div class="node" style="left:589px;top:30.8px;width:115px;height:540px">
<div class="abs" style="left:114px;top:133.0px;width:8.4px;height:265.6px;background:#3b79a3;border:1px solid #c4d3de;border-left:none;border-radius:0 4.5px 4.5px 0;box-shadow:inset -1px 0 0 #2f668c"></div>
<div class="abs" style="left:0;top:31.5px;width:115px;height:499.4px;background:#d2dbe3;clip-path:polygon(0 0,100% 0,100% calc(100% - 6.5px),calc(100% - 6.5px) 100%,2px 100%,0 calc(100% - 2px));border-radius:0 0 3px 3px"></div>
<div class="abs" style="left:1px;top:32.5px;width:113px;height:497.6px;background:linear-gradient(#b4c0cb 0,#b4c0cb 489.4px,#d3dae1 489.4px,#d3dae1 490.4px,#a3aeb9 490.4px,#c3ccd4 100%);clip-path:polygon(0 0,100% 0,100% calc(100% - 6.5px),calc(100% - 6.5px) 100%,2px 100%,0 calc(100% - 2px))"></div>
<div class="nhead" style="width:115px;height:32.5px;background:linear-gradient(#2b597b,#35688b);border-color:#cbd5de;border-bottom-color:#23475f;border-radius:4px 4px 0 0">
<div class="t1" style="left:6.2px;top:2.8px;color:#f2f6f9">Foxy toon</div><div class="t2" style="left:6.4px;top:16.3px;color:#f2f6f9;letter-spacing:0.2px">VRayToonMtl</div>
<div class="minus" style="left:99.5px;top:8.3px;width:7px;height:1.3px;background:#7fa2bc"></div>
</div>
<div class="abs" style="left:4.4px;top:35.0px;width:106.6px;height:106.3px;background:#fdfdfd">
<svg width="106.6" height="106.3" viewBox="0 0 106.6 106.3" style="position:absolute;left:0;top:0">
<defs>
<linearGradient id="pbg" x1="0" y1="0" x2="0" y2="1"><stop offset="0" stop-color="#c0c0c0"/><stop offset="0.5" stop-color="#c9c9c9"/><stop offset="0.72" stop-color="#dcdcdc"/><stop offset="0.88" stop-color="#efefef"/><stop offset="1" stop-color="#f8f8f8"/></linearGradient>
<linearGradient id="pbg2" x1="1" y1="0" x2="0.35" y2="0.75"><stop offset="0" stop-color="#4a4a4a" stop-opacity="0.3"/><stop offset="0.6" stop-color="#666" stop-opacity="0.1"/><stop offset="1" stop-color="#888" stop-opacity="0"/></linearGradient>
<radialGradient id="psph" cx="0.42" cy="0.4" r="0.66"><stop offset="0" stop-color="#b6b6b6"/><stop offset="0.6" stop-color="#b1b1b1"/><stop offset="0.9" stop-color="#a9a9a9"/><stop offset="1" stop-color="#9a9a9a"/></radialGradient>
<radialGradient id="pterm" gradientUnits="userSpaceOnUse" cx="-63.6" cy="13.2" r="160"><stop offset="0" stop-color="#000" stop-opacity="0"/><stop offset="0.71" stop-color="#000" stop-opacity="0"/><stop offset="0.80" stop-color="#000" stop-opacity="0.2"/><stop offset="1" stop-color="#000" stop-opacity="0.27"/></radialGradient>
<linearGradient id="pbot" x1="0.35" y1="0.45" x2="0.6" y2="1"><stop offset="0" stop-color="#000" stop-opacity="0"/><stop offset="0.6" stop-color="#000" stop-opacity="0.1"/><stop offset="1" stop-color="#000" stop-opacity="0.34"/></linearGradient>
<radialGradient id="pshd" cx="0.5" cy="0.5" r="0.5"><stop offset="0" stop-color="#2e2e2e" stop-opacity="0.9"/><stop offset="0.5" stop-color="#4a4a4a" stop-opacity="0.6"/><stop offset="1" stop-color="#999" stop-opacity="0"/></radialGradient>
<filter id="pnoise" x="0" y="0" width="1" height="1"><feTurbulence type="fractalNoise" baseFrequency="0.8" numOctaves="2" seed="11" result="n"/><feColorMatrix in="n" type="matrix" values="0 0 0 0 0.86  0 0 0 0 0.86  0 0 0 0 0.86  0 0 0 2.6 -1.15"/></filter>
<clipPath id="pclip"><path d="M6 1.8 H100.6 L104.9 6 V100.3 L100.6 104.6 H6 L1.8 100.3 V6 Z"/></clipPath>
<clipPath id="psc"><ellipse cx="53.1" cy="52.9" rx="42.3" ry="43.2"/></clipPath>
<radialGradient id="pnm" gradientUnits="userSpaceOnUse" cx="-63.6" cy="13.2" r="160"><stop offset="0" stop-color="#fff" stop-opacity="0"/><stop offset="0.68" stop-color="#fff" stop-opacity="0"/><stop offset="0.78" stop-color="#fff" stop-opacity="1"/><stop offset="0.9" stop-color="#fff" stop-opacity="0.8"/><stop offset="1" stop-color="#fff" stop-opacity="0.55"/></radialGradient>
<mask id="pmask"><rect width="106.6" height="106.3" fill="url(#pnm)"/></mask>
</defs>
<g clip-path="url(#pclip)">
<rect width="106.6" height="106.3" fill="url(#pbg)"/>
<rect width="106.6" height="106.3" fill="url(#pbg2)"/>
<ellipse cx="88" cy="87.5" rx="29" ry="13" fill="url(#pshd)"/>
<ellipse cx="64" cy="95.5" rx="26" ry="4" fill="url(#pshd)" opacity="0.5"/>
<ellipse cx="53.1" cy="52.9" rx="42.3" ry="43.2" fill="url(#psph)"/>
<ellipse cx="53.1" cy="52.9" rx="42.3" ry="43.2" fill="url(#pterm)"/>
<ellipse cx="53.1" cy="52.9" rx="42.3" ry="43.2" fill="url(#pbot)"/>
<g clip-path="url(#psc)"><g mask="url(#pmask)"><rect x="8" y="8" width="92" height="92" filter="url(#pnoise)" opacity="0.36"/></g></g>
</g></svg>
</div>
<div class="slot" style="top:144.55px;width:115px"><span style="left:10.6px">Diffuse map</span></div>
<div class="sep" style="top:158.30px;width:105.5px;left:5px"></div>
<div class="slot" style="top:159.02px;width:115px"><span style="left:10.6px">Reflect map</span></div>
<div class="sep" style="top:172.77px;width:105.5px;left:5px"></div>
<div class="slot" style="top:173.50px;width:115px"><span style="left:10.6px">Refract map</span></div>
<div class="sep" style="top:187.25px;width:105.5px;left:5px"></div>
<div class="slot" style="top:187.97px;width:115px"><span style="left:10.6px">Refl. gloss.</span></div>
<div class="sep" style="top:201.72px;width:105.5px;left:5px"></div>
<div class="slot" style="top:202.45px;width:115px"><span style="left:10.6px">Refr. gloss.</span></div>
<div class="sep" style="top:216.20px;width:105.5px;left:5px"></div>
<div class="slot" style="top:216.92px;width:115px"><span style="left:10.6px">IOR</span></div>
<div class="sep" style="top:230.67px;width:105.5px;left:5px"></div>
<div class="slot" style="top:231.40px;width:115px"><span style="left:10.6px">Fresnel IOR</span></div>
<div class="sep" style="top:245.15px;width:105.5px;left:5px"></div>
<div class="slot" style="top:245.88px;width:115px"><span style="left:10.6px">Opacity</span></div>
<div class="sep" style="top:259.62px;width:105.5px;left:5px"></div>
<div class="slot" style="top:260.35px;width:115px"><span style="left:10.6px">Roughness</span></div>
<div class="sep" style="top:274.10px;width:105.5px;left:5px"></div>
<div class="slot" style="top:274.82px;width:115px"><span style="left:10.6px">Fog color</span></div>
<div class="sep" style="top:288.57px;width:105.5px;left:5px"></div>
<div class="slot" style="top:289.30px;width:115px"><span style="left:10.6px">Self-illum</span></div>
<div class="sep" style="top:303.05px;width:105.5px;left:5px"></div>
<div class="slot" style="top:303.77px;width:115px"><span style="left:10.6px">Ramp offset</span></div>
<div class="sep" style="top:317.52px;width:105.5px;left:5px"></div>
<div class="slot" style="top:318.25px;width:115px"><span style="left:10.6px">Shadow</span></div>
<div class="sep" style="top:332.00px;width:105.5px;left:5px"></div>
<div class="slot" style="top:332.72px;width:115px"><span style="left:10.6px">Shadow opacity</span></div>
<div class="sep" style="top:346.47px;width:105.5px;left:5px"></div>
<div class="slot" style="top:347.20px;width:115px"><span style="left:10.6px">Light</span></div>
<div class="sep" style="top:360.95px;width:105.5px;left:5px"></div>
<div class="slot" style="top:361.68px;width:115px"><span style="left:10.6px">Blend intensity</span></div>
<div class="sep" style="top:375.43px;width:105.5px;left:5px"></div>
<div class="slot" style="top:376.15px;width:115px"><span style="left:10.6px">Highlight mask</span></div>
<div class="sep" style="top:389.90px;width:105.5px;left:5px"></div>
<div class="slot" style="top:390.62px;width:115px"><span style="left:10.6px">(1) Transp. tex</span></div>
<div class="sep" style="top:404.37px;width:105.5px;left:5px"></div>
<div class="slot" style="top:405.10px;width:115px"><span style="left:10.6px">(2) Transp. tex</span></div>
<div class="sep" style="top:418.85px;width:105.5px;left:5px"></div>
<div class="slot" style="top:419.57px;width:115px"><span style="left:10.6px">(3) Transp. tex</span></div>
<div class="sep" style="top:433.32px;width:105.5px;left:5px"></div>
<div class="slot" style="top:434.05px;width:115px"><span style="left:10.6px">(4) Transp. tex</span></div>
<div class="sep" style="top:447.80px;width:105.5px;left:5px"></div>
<div class="slot" style="top:448.52px;width:115px"><span style="left:10.6px">(5) Transp. tex</span></div>
<div class="sep" style="top:462.27px;width:105.5px;left:5px"></div>
<div class="slot" style="top:463.00px;width:115px"><span style="left:10.6px">(1) Diff. ramp</span></div>
<div class="sep" style="top:476.75px;width:105.5px;left:5px"></div>
<div class="slot" style="top:477.47px;width:115px"><span style="left:10.6px">(2) Diff. ramp</span></div>
<div class="sep" style="top:491.22px;width:105.5px;left:5px"></div>
<div class="slot" style="top:491.95px;width:115px"><span style="left:10.6px">(1) Spec. ramp</span></div>
<div class="sep" style="top:505.70px;width:105.5px;left:5px"></div>
<div class="slot" style="top:506.43px;width:115px"><span style="left:10.6px">(2) Spec. ramp</span></div>
<div class="dot din" style="left:-3.9px;top:146.60px"></div>
<div class="dot din" style="left:-3.9px;top:161.07px"></div>
<div class="dot din" style="left:-3.9px;top:175.55px"></div>
<div class="dot din" style="left:-3.9px;top:190.02px"></div>
<div class="dot din" style="left:-3.9px;top:204.50px"></div>
<div class="dot din" style="left:-3.9px;top:218.97px"></div>
<div class="dot din" style="left:-3.9px;top:233.45px"></div>
<div class="dot din" style="left:-3.9px;top:247.93px"></div>
<div class="dot don" style="left:-3.9px;top:262.40px"></div>
<div class="dot din" style="left:-3.9px;top:276.88px"></div>
<div class="dot din" style="left:-3.9px;top:291.35px"></div>
<div class="dot din" style="left:-3.9px;top:305.82px"></div>
<div class="dot din" style="left:-3.9px;top:320.30px"></div>
<div class="dot din" style="left:-3.9px;top:334.77px"></div>
<div class="dot din" style="left:-3.9px;top:349.25px"></div>
<div class="dot din" style="left:-3.9px;top:363.73px"></div>
<div class="dot din" style="left:-3.9px;top:378.20px"></div>
<div class="dot din" style="left:-3.9px;top:392.67px"></div>
<div class="dot din" style="left:-3.9px;top:407.15px"></div>
<div class="dot din" style="left:-3.9px;top:421.62px"></div>
<div class="dot din" style="left:-3.9px;top:436.10px"></div>
<div class="dot din" style="left:-3.9px;top:450.57px"></div>
<div class="dot don" style="left:-3.9px;top:465.05px"></div>
<div class="dot don" style="left:-3.9px;top:479.52px"></div>
<div class="dot din" style="left:-3.9px;top:494.00px"></div>
<div class="dot din" style="left:-3.9px;top:508.48px"></div>
<div class="dot din" style="left:117px;top:260.7px"></div>
</div>
<svg class="abs" style="left:46.5px;top:431.5px" width="10" height="15" viewBox="0 0 10 15"><path d="M1 1 V9.6 L3 7.9 L4.9 12.4 L6.2 11.8 L4.4 7.5 H7 Z" fill="#f6f6f6" stroke="#1c1c1c" stroke-width="0.8" stroke-linejoin="round"/></svg>
</div>
<div id="rp">
<div class="abs" style="left:-1px;top:0;width:1px;height:595px;background:#333"></div>
<div class="abs" style="left:2.1px;top:0;width:1.9px;height:595px;background:#363636"></div>
<div class="abs" style="left:3px;top:0;width:201px;height:9px;background:linear-gradient(#4a4a4a,#303030)"></div>
<div class="lbl" style="left:7.5px;top:0.00px;transform:scaleX(1.0);transform-origin:0 50%;font-weight:bold;font-size:7.6px;color:#f2f2f2">Navigator</div>
<div class="abs" style="left:3px;top:9px;width:201px;height:61px;background:#444"></div>
<div class="abs" style="left:3px;top:69.7px;width:201px;height:4.3px;background:#333"></div>
<div class="abs" style="left:72px;top:16.3px;width:74px;height:50px;border:1px solid #7d2a2d"></div>
<div class="abs" style="left:78px;top:36px;width:12.3px;height:6.0px;background:#4fb07b"></div>
<div class="abs" style="left:92px;top:29.4px;width:11.2px;height:5.9px;background:#4fb07b"></div>
<div class="abs" style="left:107px;top:29.4px;width:11.7px;height:12.0px;background:#4fb07b"></div>
<div class="abs" style="left:107px;top:44.5px;width:11.7px;height:12.1px;background:#4fb07b"></div>
<div class="abs" style="left:123.4px;top:16.6px;width:14.4px;height:47.6px;background:#3c78a6;border:1px dotted #dcdcdc"></div>
<div class="abs" style="left:3px;top:74px;width:201px;height:12px;background:linear-gradient(#868686 0,#525252 1px,#4b4b4b 40%,#3a3a3a 86%,#2b2b2b 88%,#2b2b2b 100%)"></div>
<div class="lbl" style="left:7.5px;top:74.70px;transform:scaleX(0.99);transform-origin:0 50%;font-weight:bold;font-size:7.6px;color:#f4f4f4">Foxy toon&nbsp; ( VRayToonMtl )</div>
<div class="abs" style="left:6px;top:88.4px;width:198px;height:10.6px;background:#606060"></div>
<div class="lbl" style="left:8px;top:88.70px;transform:scaleX(0.9);transform-origin:0 50%;color:#d8d8d8;font-size:7.8px">Foxy toon</div>
<div class="abs" style="left:4px;top:102.5px;width:200px;height:493px;background:#4f4f4f;border-top:1px solid #424242"></div>
<div class="abs" style="left:8.3px;top:107.4px;width:0;height:0;border-left:1.6px solid transparent;border-right:1.6px solid transparent;border-top:2.2px solid #e4e4e4"></div>
<div class="lbl" style="left:16px;top:104.70px;transform:scaleX(0.9);transform-origin:0 50%;font-weight:bold;font-size:8px;color:#f4f4f4">Basic parameters</div>
<div class="abs" style="left:196.5px;top:107px;width:3px;height:3px;background:#5c5c5c"></div>
<div class="lbl" style="left:12px;top:118.00px;transform:scaleX(0.89);transform-origin:0 50%;">Diffuse</div>
<div class="sw" style="left:59.6px;top:119.00px;width:26.70px;height:7.30px;background:#c2c2c2"></div>
<div class="mb" style="left:90.4px;top:119.00px;width:6.60px;height:7.50px;line-height:7.50px;background:#5c5c5c;color:#d6d6d6"></div>
<div class="lbl" style="left:12px;top:129.30px;transform:scaleX(0.89);transform-origin:0 50%;">Roughness</div>
<div class="spin" style="left:59.6px;top:130.20px;width:27.10px;height:7.50px;line-height:7.50px"><b style="transform:scaleX(0.89);transform-origin:0 50%">0,0</b><s style="top:0.75px"></s></div>
<div class="mb" style="left:90.4px;top:130.20px;width:6.60px;height:7.50px;line-height:7.50px;background:#5c5c5c;color:#d6d6d6">M</div>
<div class="grp" style="left:11px;top:143.20px;width:185.00px;height:90.30px"></div>
<div class="glbl" style="left:12px;top:140.20px;transform:scaleX(0.89);transform-origin:0 50%;">Diffuse Ramp</div>
<div class="lbl" style="left:16px;top:152.70px;transform:scaleX(0.89);transform-origin:0 50%;">Number:</div>
<div class="spin" style="left:52px;top:152.40px;width:26.50px;height:7.30px;line-height:7.30px"><b style="transform:scaleX(0.89);transform-origin:0 50%">1</b><s style="top:0.65px"></s></div>
<div class="lbl" style="right:57.2px;top:152.70px;transform:scaleX(0.89);transform-origin:100% 50%">Color:</div>
<div class="sw" style="left:155.4px;top:152.40px;width:26.90px;height:7.30px;background:#fff"></div>
<div class="mb" style="left:185.8px;top:152.40px;width:6.80px;height:7.30px;line-height:7.30px;background:#5c5c5c;color:#d6d6d6">M</div>
<div class="lbl" style="left:16px;top:166.00px;transform:scaleX(0.89);transform-origin:0 50%;">Position:</div>
<div class="spin" style="left:52px;top:165.00px;width:26.50px;height:7.50px;line-height:7.50px"><b style="transform:scaleX(0.89);transform-origin:0 50%">0,359</b><s style="top:0.75px"></s></div>
<div class="lbl" style="right:57.2px;top:166.00px;transform:scaleX(0.89);transform-origin:100% 50%">Interpolation:</div>
<div class="dd" style="left:155.4px;top:163.70px;width:37.90px;height:10.30px;line-height:10.30px"><b style="transform:scaleX(0.89);transform-origin:0 50%">None</b></div>
<div class="abs" style="left:16px;top:178.00px;width:178px;height:39.00px;background:#a9a9a9"></div>
<div class="abs" style="left:19px;top:181.00px;width:61.50px;height:33.00px;background:#5a5a5a"></div>
<div class="abs" style="left:80.5px;top:181.00px;width:110.00px;height:33.00px;background:#fff"></div>
<svg class="abs" style="left:16px;top:177.00px" width="178" height="41.00" viewBox="0 0 178 41.00">
<path d="M0.5 1 H6.5 L3.5 4 Z" fill="#fff"/><path d="M0.5 40 H6.5 L3.5 37 Z" fill="#fff"/>
<path d="M61.5 0.5 H67.5 L64.5 3.5 Z" fill="#000"/><path d="M61.5 40.5 H67.5 L64.5 37.5 Z" fill="#000"/>
</svg>
<div class="lbl" style="left:15.5px;top:219.00px;transform:scaleX(0.89);transform-origin:0 50%;">Ramp Offset</div>
<div class="spin" style="left:62.7px;top:219.50px;width:27.30px;height:8.10px;line-height:8.10px"><b style="transform:scaleX(0.89);transform-origin:0 50%">0,0</b><s style="top:1.05px"></s></div>
<div class="mb" style="left:93.5px;top:219.50px;width:7.50px;height:8.10px;line-height:8.10px;background:#5c5c5c;color:#d6d6d6"></div>
<div class="lbl" style="left:108.8px;top:219.00px;transform:scaleX(0.89);transform-origin:0 50%;">Output Offset</div>
<div class="spin" style="left:157px;top:219.50px;width:27.70px;height:8.10px;line-height:8.10px"><b style="transform:scaleX(0.89);transform-origin:0 50%">0,0</b><s style="top:1.05px"></s></div>
<div class="lbl" style="left:12.5px;top:237.30px;transform:scaleX(0.89);transform-origin:0 50%;">Reflect</div>
<div class="sw" style="left:62.7px;top:238.00px;width:27.70px;height:8.00px;background:#000"></div>
<div class="mb" style="left:93.5px;top:238.00px;width:7.50px;height:8.00px;line-height:8.00px;background:#5c5c5c;color:#d6d6d6"></div>
<div class="lbl" style="left:108.8px;top:237.30px;transform:scaleX(0.89);transform-origin:0 50%;">Max depth</div>
<div class="spin" style="left:157px;top:238.00px;width:39.00px;height:8.00px;line-height:8.00px"><b style="transform:scaleX(0.89);transform-origin:0 50%">5</b><s style="top:1.00px"></s></div>
<div class="lbl" style="left:12.5px;top:249.00px;transform:scaleX(0.89);transform-origin:0 50%;">Glossiness</div>
<div class="spin" style="left:62.7px;top:249.70px;width:27.70px;height:7.70px;line-height:7.70px"><b style="transform:scaleX(0.89);transform-origin:0 50%">1,0</b><s style="top:0.85px"></s></div>
<div class="mb" style="left:93.5px;top:249.70px;width:7.50px;height:7.70px;line-height:7.70px;background:#5c5c5c;color:#d6d6d6"></div>
<div class="cb" style="left:110.5px;top:250.60px;width:6.50px;height:6.80px"></div>
<div class="lbl" style="left:120px;top:250.00px;transform:scaleX(0.89);transform-origin:0 50%;">Reflect on back side</div>
<svg class="abs" style="left:14.5px;top:262.50px" width="6.50" height="6.80" viewBox="0 0 7 7"><path d="M1.2 3.4 L2.9 5.4 L5.9 1.2" stroke="#f0f0f0" stroke-width="1.3" fill="none"/></svg>
<div class="lbl" style="left:23.7px;top:261.70px;transform:scaleX(0.89);transform-origin:0 50%;">Fresnel reflections</div>
<div class="cb" style="left:110.5px;top:262.50px;width:6.50px;height:6.80px"></div>
<div class="lbl" style="left:120px;top:261.70px;transform:scaleX(0.89);transform-origin:0 50%;">Dim dist.</div>
<div class="spin" style="left:157px;top:262.00px;width:39.00px;height:7.70px;line-height:7.70px"><b style="transform:scaleX(0.89);transform-origin:0 50%">100,0cm</b><s style="top:0.85px"></s></div>
<div class="lbl" style="left:12.5px;top:273.70px;transform:scaleX(0.89);transform-origin:0 50%;">Fresnel IOR</div>
<div class="mb" style="left:52px;top:273.80px;width:8.00px;height:7.20px;line-height:7.20px;background:#4a86cf;color:#eaf2ff">L</div>
<div class="spin" style="left:62.7px;top:273.60px;width:27.70px;height:7.40px;line-height:7.40px"><b style="transform:scaleX(0.89);transform-origin:0 50%">1,6</b><s style="top:0.70px"></s></div>
<div class="mb" style="left:93.5px;top:273.60px;width:7.50px;height:7.40px;line-height:7.40px;background:#5c5c5c;color:#d6d6d6"></div>
<div class="lbl" style="left:108.8px;top:272.30px;transform:scaleX(0.89);transform-origin:0 50%;">Dim fall off</div>
<div class="spin" style="left:157px;top:273.40px;width:39.00px;height:7.60px;line-height:7.60px"><b style="transform:scaleX(0.89);transform-origin:0 50%">0,0</b><s style="top:0.80px"></s></div>
<div class="lbl" style="left:108.8px;top:286.60px;transform:scaleX(0.89);transform-origin:0 50%;">Affect channels</div>
<div class="dd" style="left:157px;top:285.70px;width:38.00px;height:10.30px;line-height:10.30px"><b style="transform:scaleX(0.89);transform-origin:0 50%">Col...nly</b></div>
<div class="grp" style="left:11px;top:301.00px;width:185.00px;height:77.00px"></div>
<div class="glbl" style="left:12px;top:298.00px;transform:scaleX(0.89);transform-origin:0 50%;">Specular Ramp</div>
<div class="lbl" style="left:16px;top:311.70px;transform:scaleX(0.89);transform-origin:0 50%;">Number:</div>
<div class="spin" style="left:52px;top:311.40px;width:26.50px;height:7.30px;line-height:7.30px"><b style="transform:scaleX(0.89);transform-origin:0 50%">0</b><s style="top:0.65px"></s></div>
<div class="lbl" style="right:57.2px;top:311.70px;transform:scaleX(0.89);transform-origin:100% 50%">Color:</div>
<div class="sw" style="left:155px;top:311.00px;width:27.70px;height:8.00px;background:#000"></div>
<div class="mb" style="left:186.2px;top:311.00px;width:7.10px;height:8.00px;line-height:8.00px;background:#5c5c5c;color:#d6d6d6"></div>
<div class="lbl" style="left:16px;top:323.90px;transform:scaleX(0.89);transform-origin:0 50%;">Position:</div>
<div class="spin" style="left:52px;top:324.00px;width:26.50px;height:7.50px;line-height:7.50px"><b style="transform:scaleX(0.89);transform-origin:0 50%">0,0</b><s style="top:0.75px"></s></div>
<div class="lbl" style="right:57.2px;top:323.90px;transform:scaleX(0.89);transform-origin:100% 50%">Interpolation:</div>
<div class="dd" style="left:155px;top:322.30px;width:38.30px;height:10.20px;line-height:10.20px"><b style="transform:scaleX(0.89);transform-origin:0 50%">None</b></div>
<div class="abs" style="left:16px;top:337.00px;width:178px;height:38.50px;background:#a9a9a9"></div>
<div class="abs" style="left:19px;top:340.00px;width:85.30px;height:32.50px;background:#000"></div>
<div class="abs" style="left:104.3px;top:340.00px;width:86.20px;height:32.50px;background:#fff"></div>
<svg class="abs" style="left:16px;top:336.00px" width="178" height="40.50" viewBox="0 0 178 40.50">
<path d="M0.5 1 H6.5 L3.5 4 Z" fill="#fff"/><path d="M0.5 39.5 H6.5 L3.5 36.5 Z" fill="#fff"/>
<path d="M85.29999999999995 0.5 H91.29999999999995 L88.29999999999995 3.5 Z" fill="#000"/><path d="M85.29999999999995 40.0 H91.29999999999995 L88.29999999999995 37.0 Z" fill="#000"/>
</svg>
<div class="grp" style="left:11px;top:384.00px;width:185.00px;height:41.30px"></div>
<div class="glbl" style="left:12px;top:381.00px;transform:scaleX(0.89);transform-origin:0 50%;">Toon anisotropy</div>
<div class="lbl" style="left:12.5px;top:395.70px;transform:scaleX(0.89);transform-origin:0 50%;">Highlight type</div>
<div class="dd" style="left:59.6px;top:394.90px;width:41.00px;height:10.50px;line-height:10.50px"><b style="transform:scaleX(0.89);transform-origin:0 50%">Shaped</b></div>
<div class="lbl" style="left:106.4px;top:395.70px;transform:scaleX(0.89);transform-origin:0 50%;">Shape preset</div>
<div class="dd" style="left:153px;top:394.90px;width:40.00px;height:10.50px;line-height:10.50px"><b style="transform:scaleX(0.89);transform-origin:0 50%">Default</b></div>
<div class="lbl" style="left:12.5px;top:410.70px;transform:scaleX(0.89);transform-origin:0 50%;">Highlight mask</div>
<div class="spin" style="left:65.4px;top:411.50px;width:27.60px;height:8.00px;line-height:8.00px"><b style="transform:scaleX(0.89);transform-origin:0 50%">0,0</b><s style="top:1.00px"></s></div>
<div class="mb" style="left:96.5px;top:411.50px;width:7.80px;height:8.00px;line-height:8.00px;background:#5c5c5c;color:#d6d6d6"></div>
<div class="lbl" style="left:12.5px;top:430.20px;transform:scaleX(0.89);transform-origin:0 50%;">Refract</div>
<div class="sw" style="left:62.7px;top:430.80px;width:27.70px;height:8.20px;background:#000"></div>
<div class="mb" style="left:93.5px;top:430.80px;width:7.50px;height:8.20px;line-height:8.20px;background:#5c5c5c;color:#d6d6d6"></div>
<div class="lbl" style="left:108.8px;top:430.20px;transform:scaleX(0.89);transform-origin:0 50%;">Max depth</div>
<div class="spin" style="left:157px;top:431.00px;width:39.00px;height:8.00px;line-height:8.00px"><b style="transform:scaleX(0.89);transform-origin:0 50%">5</b><s style="top:1.00px"></s></div>
<div class="lbl" style="left:12.5px;top:442.50px;transform:scaleX(0.89);transform-origin:0 50%;">Glossiness</div>
<div class="spin" style="left:62.7px;top:443.30px;width:27.70px;height:7.60px;line-height:7.60px"><b style="transform:scaleX(0.89);transform-origin:0 50%">1,0</b><s style="top:0.80px"></s></div>
<div class="mb" style="left:93.5px;top:443.30px;width:7.50px;height:7.60px;line-height:7.60px;background:#5c5c5c;color:#d6d6d6"></div>
<svg class="abs" style="left:110.5px;top:443.50px" width="6.50" height="7.00" viewBox="0 0 7 7"><path d="M1.2 3.4 L2.9 5.4 L5.9 1.2" stroke="#f0f0f0" stroke-width="1.3" fill="none"/></svg>
<div class="lbl" style="left:120px;top:443.20px;transform:scaleX(0.89);transform-origin:0 50%;">Affect shadows</div>
<div class="lbl" style="left:12.5px;top:453.90px;transform:scaleX(0.89);transform-origin:0 50%;">IOR</div>
<div class="spin" style="left:62.7px;top:454.60px;width:27.70px;height:8.00px;line-height:8.00px"><b style="transform:scaleX(0.89);transform-origin:0 50%">1,6</b><s style="top:1.00px"></s></div>
<div class="mb" style="left:93.5px;top:454.60px;width:7.50px;height:8.00px;line-height:8.00px;background:#5c5c5c;color:#d6d6d6"></div>
<div class="cb" style="left:13.5px;top:467.30px;width:7.20px;height:7.20px"></div>
<div class="lbl" style="left:23.7px;top:466.70px;transform:scaleX(0.89);transform-origin:0 50%;">Abbe number</div>
<div class="spin" style="left:62.7px;top:466.90px;width:37.90px;height:7.60px;line-height:7.60px"><b style="transform:scaleX(0.89);transform-origin:0 50%">50,0</b><s style="top:0.80px"></s></div>
<div class="lbl" style="left:108.8px;top:465.70px;transform:scaleX(0.89);transform-origin:0 50%;">Affect channels</div>
<div class="dd" style="left:157px;top:466.70px;width:38.00px;height:10.30px;line-height:10.30px"><b style="transform:scaleX(0.89);transform-origin:0 50%">Col...nly</b></div>
<div class="lbl" style="left:12.5px;top:481.70px;transform:scaleX(0.89);transform-origin:0 50%;">Fog color</div>
<div class="sw" style="left:62.7px;top:482.30px;width:27.70px;height:8.20px;background:#fff"></div>
<div class="mb" style="left:93.5px;top:482.30px;width:7.50px;height:8.20px;line-height:8.20px;background:#5c5c5c;color:#d6d6d6"></div>
<div class="lbl" style="left:108.8px;top:481.70px;transform:scaleX(0.89);transform-origin:0 50%;">Fog bias</div>
<div class="spin" style="left:157px;top:482.30px;width:39.00px;height:8.20px;line-height:8.20px"><b style="transform:scaleX(0.89);transform-origin:0 50%">0,0</b><s style="top:1.10px"></s></div>
<div class="lbl" style="left:12.5px;top:493.00px;transform:scaleX(0.89);transform-origin:0 50%;">Fog multiplier</div>
<div class="spin" style="left:62.7px;top:494.20px;width:37.90px;height:7.60px;line-height:7.60px"><b style="transform:scaleX(0.89);transform-origin:0 50%">1,0</b><s style="top:0.80px"></s></div>
<div class="lbl" style="left:12.5px;top:507.70px;transform:scaleX(0.89);transform-origin:0 50%;">Self-illumination</div>
<div class="sw" style="left:62.7px;top:508.40px;width:27.70px;height:8.40px;background:#000"></div>
<div class="mb" style="left:93.5px;top:508.40px;width:7.50px;height:8.40px;line-height:8.40px;background:#5c5c5c;color:#d6d6d6"></div>
<div class="cb" style="left:108.4px;top:509.00px;width:7.00px;height:7.10px"></div>
<div class="lbl" style="left:118.5px;top:508.70px;transform:scaleX(0.89);transform-origin:0 50%;">GI</div>
<div class="lbl" style="left:140px;top:507.70px;transform:scaleX(0.89);transform-origin:0 50%;">Mult</div>
<div class="spin" style="left:157px;top:509.00px;width:39.00px;height:7.50px;line-height:7.50px"><b style="transform:scaleX(0.89);transform-origin:0 50%">1,0</b><s style="top:0.75px"></s></div>
<div class="cb" style="left:13.9px;top:522.70px;width:6.80px;height:7.20px"></div>
<div class="lbl" style="left:23.7px;top:522.10px;transform:scaleX(0.89);transform-origin:0 50%;">Compensate camera exposure</div>
<div class="grp" style="left:11px;top:537.50px;width:185.00px;height:42.70px"></div>
<div class="glbl" style="left:12px;top:534.50px;transform:scaleX(0.89);transform-origin:0 50%;">Shadow control</div>
<div class="cb" style="left:13.9px;top:551.60px;width:6.80px;height:7.20px"></div>
<div class="lbl" style="left:23.7px;top:550.70px;transform:scaleX(0.89);transform-origin:0 50%;">Shadow blend</div>
<div class="lbl" style="left:12px;top:567.30px;transform:scaleX(0.89);transform-origin:0 50%;">Shadow color</div>
<div class="sw" style="left:57px;top:568.20px;width:27.20px;height:7.50px;background:#fff"></div>
<div class="mb" style="left:88px;top:568.20px;width:7.00px;height:7.50px;line-height:7.50px;background:#5c5c5c;color:#d6d6d6"></div>
<div class="lbl" style="left:103.7px;top:567.30px;transform:scaleX(0.89);transform-origin:0 50%;">Shadow opacity</div>
<div class="spin" style="left:155.4px;top:568.20px;width:27.30px;height:7.50px;line-height:7.50px"><b style="transform:scaleX(0.89);transform-origin:0 50%">0,0</b><s style="top:0.75px"></s></div>
<div class="mb" style="left:186px;top:568.20px;width:7.00px;height:7.50px;line-height:7.50px;background:#5c5c5c;color:#d6d6d6"></div>
<div class="grp" style="left:11px;top:585.00px;width:185.00px;height:35.00px"></div>
<div class="glbl" style="left:12px;top:582.00px;transform:scaleX(0.89);transform-origin:0 50%;">Light control</div>
</div>
</body></html>
